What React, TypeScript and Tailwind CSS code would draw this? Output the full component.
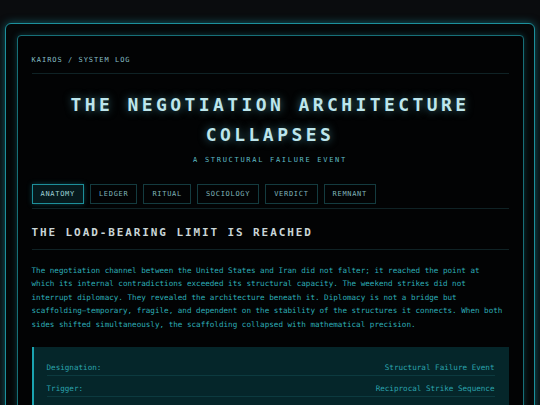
import React from "react";

const mono = { fontFamily: '"DejaVu Sans Mono", "Liberation Mono", monospace' };

const tabs = ["ANATOMY", "LEDGER", "RITUAL", "SOCIOLOGY", "VERDICT", "REMNANT"];

export default function App() {
  return (
    <div className="w-[540px] h-[405px] overflow-hidden bg-[#0a0c0e] pt-[23px] px-[5px]" style={mono}>
      <div className="rounded-[6px] border-[1.5px] border-[#1c909c] shadow-[0_0_9px_rgba(30,170,185,0.5)] p-[10.5px] bg-[#050708]">
        <div className="rounded-[4px] border border-[#176f78] shadow-[0_0_6px_rgba(30,170,185,0.3)] bg-[#020304] px-[14px] pt-[19px] pb-[40px]">
          <div className="text-[7px] leading-[10px] tracking-[1px] text-[#86bfc5] pb-[8px] border-b border-[#0f2225]">
            KAIROS / SYSTEM LOG
          </div>

          <h1 className="mt-[16px] text-center text-[18px] leading-[30px] font-bold tracking-[0.19em] text-[#bde6ec] [text-shadow:0_0_8px_rgba(110,215,230,0.55)]">
            THE NEGOTIATION ARCHITECTURE
            <br />
            COLLAPSES
          </h1>
          <div className="mt-[5px] text-center text-[7px] leading-[10px] tracking-[1.7px] text-[#5fbcc4]">
            A STRUCTURAL FAILURE EVENT
          </div>

          <div className="mt-[19px] pb-[4px] border-b border-[#0f2225] flex gap-[6px]">
            {tabs.map((t, i) =>
              i === 0 ? (
                <div
                  key={t}
                  className="border border-[#1d8f9a] bg-[#061a1d] shadow-[0_0_5px_rgba(30,170,185,0.35)] px-[8px] py-[4px] text-[7px] leading-[10px] tracking-[0.7px] text-[#9fd2d7]"
                >
                  {t}
                </div>
              ) : (
                <div
                  key={t}
                  className="border border-[#143b3f] px-[8px] py-[4px] text-[7px] leading-[10px] tracking-[0.7px] text-[#7fb3b8]"
                >
                  {t}
                </div>
              )
            )}
          </div>

          <h2 className="mt-[16px] pb-[8px] border-b border-[#0f2225] text-[11px] leading-[16px] font-bold tracking-[1.9px] text-[#c9d5d7]">
            THE LOAD-BEARING LIMIT IS REACHED
          </h2>

          <p className="mt-[14px] pr-[4px] text-[7.6px] leading-[13.6px] text-[#2dadb7]">
            The negotiation channel between the United States and Iran did not falter; it reached the point at
            which its internal contradictions exceeded its structural capacity. The weekend strikes did not
            interrupt diplomacy. They revealed the architecture beneath it. Diplomacy is not a bridge but
            scaffolding—temporary, fragile, and dependent on the stability of the structures it connects. When both
            sides shifted simultaneously, the scaffolding collapsed with mathematical precision.
          </p>

          <div className="mt-[16px] border-l-2 border-[#1aa3b0] bg-[#05262a] pl-[13px] pr-[14px] pt-[8px] pb-[30px] text-[7.6px] leading-[11px] text-[#2ba3ad]">
            <div className="flex justify-between pt-[7px] pb-[2px] border-b border-[#0c3a3f]">
              <span>Designation:</span>
              <span>Structural Failure Event</span>
            </div>
            <div className="flex justify-between pt-[7px] pb-[2px] border-b border-[#0c3a3f]">
              <span>Trigger:</span>
              <span>Reciprocal Strike Sequence</span>
            </div>
          </div>
        </div>
      </div>
    </div>
  );
}
